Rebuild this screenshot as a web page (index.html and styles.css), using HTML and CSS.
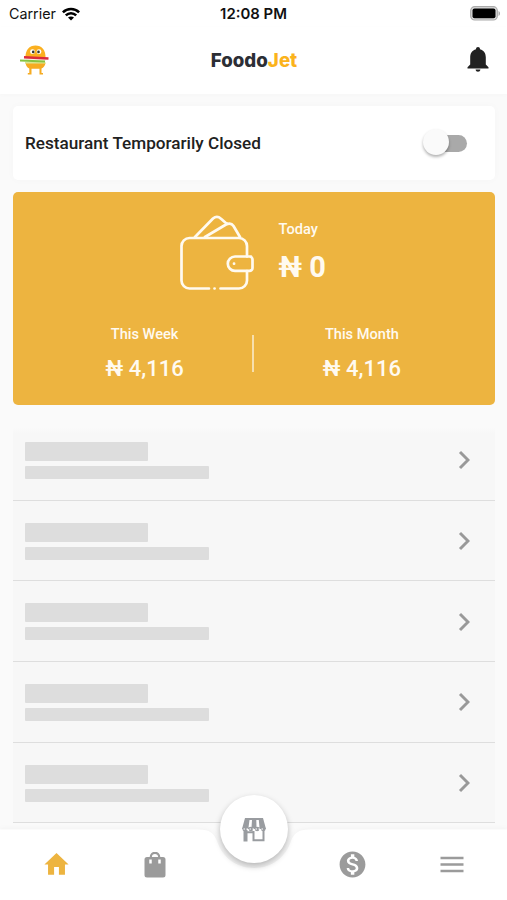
FILE: index.html
```html
<!DOCTYPE html>
<html lang="en">
<head>
<meta charset="utf-8">
<title>FoodoJet</title>
<link rel="stylesheet" href="styles.css">
</head>
<body>
<div class="app">
  <div class="status">
    <div class="carrier">Carrier
      <svg width="18" height="14" viewBox="0 0 18 14" fill="none" stroke="#000" stroke-width="2.5"><path d="M.9 5.3C5.3.8 12.7.8 17.1 5.3M3.8 8.4c2.9-2.9 7.5-2.9 10.4 0"/><path d="M9 13.6 6 10.6c1.700-1.400 4.300-1.400 6 0z" fill="#000" stroke="none"/></svg>
    </div>
    <div class="clock">12:08 PM</div>
    <svg class="battery" width="31" height="15" viewBox="0 0 31 15"><rect x=".7" y=".7" width="26.600" height="13.300" rx="4" fill="#ddd" stroke="#aaa" stroke-width="1.200"/><rect x="2.500" y="2.500" width="23" height="9.700" rx="2" fill="#000"/><path d="M28.500 5v5c2-.8 2-4.200 0-5z" fill="#aaa"/></svg>
  </div>
  <header class="header">
    <svg class="mascot" width="30" height="30" viewBox="0 0 30 30"><path d="M5.500 13C5 5 9.500.5 15.500.5S26 5 25.500 13z" fill="#fbb01f"/><path d="M5.500 18h20c-.5 3-2 4.500-4 5.500V28h1.500v1.500h-3.500v-5.700h-8v5.700H7.800V28h1.500v-4.500c-2-1-3.300-2.500-3.800-5.500z" fill="#f6ab22"/><path d="M5.500 12.500h20V16h-20z" fill="#fcefe0"/><path d="M4 12.200 28.500 13.500" stroke="#dc2b3b" stroke-width="2.400"/><path d="M5 17.800h20.500" stroke="#dbe38a" stroke-width="1.500"/><path d="M0 15.500 25 16.500" stroke="#87c440" stroke-width="2"/><circle cx="12.500" cy="6.700" r="2.400" fill="#fff"/><circle cx="19" cy="6.700" r="2.400" fill="#fff"/><circle cx="13.200" cy="6.900" r="1.300" fill="#333"/><circle cx="18.500" cy="6.900" r="1.300" fill="#333"/></svg>
    <div class="brand">Foodo<span>Jet</span></div>
    <svg class="bell" width="22" height="26" viewBox="0 0 22 26" fill="#212121"><path d="M11 0c1.200 0 2 .9 2 2.200 4 1 5.800 4.300 5.800 8v7.300l2.700 2.700v1.300H.5v-1.300l2.700-2.700v-7.300c0-3.700 1.800-7 5.800-8C9 .9 9.800 0 11 0zM8.600 22.600h4.800c-.2 1.400-1.100 2.200-2.400 2.200s-2.200-.8-2.400-2.200z"/></svg>
  </header>
  <main class="main">
    <section class="closed"><span>Restaurant Temporarily Closed</span><div class="switch"><i></i></div></section>
    <section class="earnings">
      <div class="today">
        <svg class="wallet" width="76" height="76" viewBox="0 0 76 76" fill="none" stroke="#fffaf0" stroke-width="2.700" stroke-linecap="round" stroke-linejoin="round"><path d="M30 73.500H10.500a8 8 0 0 1-8-8V31a8 8 0 0 1 8-8H60a8 8 0 0 1 8 8v10.500M68 56v9.500a8 8 0 0 1-8 8H41.500M35.500 73.500h.1"/><path d="M72 41.500H56a7.200 7.200 0 0 0 0 14.400h14.500a3 3 0 0 0 3-3V44.500a3 3 0 0 0-3-3M55 48.700h.1"/><path d="M16 22 34 3.500q4-3.500 8 .2L48 9M26 22 47 9.500q5-2.500 7.500 1.500L61 22"/></svg>
        <div class="amount"><small>Today</small><strong>₦ 0</strong></div>
      </div>
      <div class="periods">
        <div class="period"><small>This Week</small><b>₦ 4,116</b></div>
        <div class="divider"></div>
        <div class="period"><small>This Month</small><b>₦ 4,116</b></div>
      </div>
    </section>
    <section class="list">
      <div class="row"><div><i class="bar title"></i><i class="bar line"></i></div><svg class="chev" viewBox="0 0 12 20"><path d="m2 2 8 8-8 8"/></svg></div>
      <div class="row"><div><i class="bar title"></i><i class="bar line"></i></div><svg class="chev" viewBox="0 0 12 20"><path d="m2 2 8 8-8 8"/></svg></div>
      <div class="row"><div><i class="bar title"></i><i class="bar line"></i></div><svg class="chev" viewBox="0 0 12 20"><path d="m2 2 8 8-8 8"/></svg></div>
      <div class="row"><div><i class="bar title"></i><i class="bar line"></i></div><svg class="chev" viewBox="0 0 12 20"><path d="m2 2 8 8-8 8"/></svg></div>
      <div class="row"><div><i class="bar title"></i><i class="bar line"></i></div><svg class="chev" viewBox="0 0 12 20"><path d="m2 2 8 8-8 8"/></svg></div>
    </section>
  </main>
  <nav class="nav">
    <svg class="navshape" viewBox="0 0 507 71"><path d="M0 .5H198C211 .5 214 5 217 12C222 28 236 39 254 39S286 28 291 12C294 5 297 .5 310 .5H507V71H0z" fill="#fff"/></svg>
    <div class="item"><svg width="29" height="31" viewBox="0 0 24 24" preserveAspectRatio="none" fill="#edb440"><path d="M10 20v-6h4v6h5v-8h3L12 3 2 12h3v8z"/></svg></div>
    <div class="item"><svg width="22" height="26" viewBox="0 0 22 26"><path d="M3 5h16a2.500 2.500 0 0 1 2.500 2.500V23a2.500 2.500 0 0 1-2.500 2.500H3A2.500 2.500 0 0 1 .5 23V7.500A2.500 2.500 0 0 1 3 5z" fill="#9b9b9b"/><path d="M6.800 6V5a4.200 4.200 0 0 1 8.400 0v1" fill="none" stroke="#9b9b9b" stroke-width="2.200"/><path d="M6.500 7.500v4M15.500 7.500v4" stroke="#fff" stroke-width="2.500"/></svg></div>
    <div class="item"></div>
    <div class="item"><svg width="31" height="31" viewBox="0 0 24 24" fill="#9b9b9b"><path d="M12 2C6.480 2 2 6.480 2 12s4.480 10 10 10 10-4.480 10-10S17.520 2 12 2zm1.410 16.090V20h-2.670v-1.930c-1.710-.36-3.160-1.460-3.270-3.400h1.960c.1 1.050.82 1.870 2.650 1.870 1.960 0 2.400-.98 2.400-1.590 0-.83-.44-1.610-2.670-2.140-2.480-.6-4.180-1.620-4.180-3.670 0-1.720 1.390-2.840 3.110-3.210V4h2.670v1.950c1.860.45 2.790 1.860 2.850 3.390H14.300c-.05-1.110-.64-1.870-2.220-1.870-1.500 0-2.400.68-2.400 1.640 0 .84.65 1.390 2.670 1.910s4.180 1.390 4.180 3.910c-.01 1.830-1.380 2.830-3.120 3.160z"/></svg></div>
    <div class="item"><svg width="24" height="17" viewBox="0 0 24 17"><path d="M.5 2h23M.5 8.500h23M.5 15h23" stroke="#9b9b9b" stroke-width="2.500"/></svg></div>
    <div class="fab"><svg width="26" height="25" viewBox="0 0 26 25" fill="none" stroke="#999ca0"><path d="M4 1h18l3 11H1z" fill="#999ca0" stroke="none"/><path d="M8.500 3H11l-.5 7.500h-3zM15.300 3h2.500l.7 7.500h-3z" fill="#fff" stroke="none"/><circle cx="3.700" cy="12" r="2.300" fill="#999ca0" stroke="none"/><circle cx="9.900" cy="12" r="2.300" fill="#999ca0" stroke="none"/><circle cx="16.100" cy="12" r="2.300" fill="#999ca0" stroke="none"/><circle cx="22.300" cy="12" r="2.300" fill="#999ca0" stroke="none"/><path d="M2.500 12h21" stroke="#fff" stroke-width="1" stroke-dasharray="1.500 1.500"/><path d="M2.500 13h4v11.500h-4z" fill="#999ca0" stroke="none"/><path d="M6 15.200h6.500M12.500 14v9.300H22.500V14" stroke-width="2"/></svg></div>
  </nav>
</div>
</body>
</html>
```
FILE: styles.css
```css
* { box-sizing: border-box; }
body { margin: 0; font-family: Roboto, "Liberation Sans", sans-serif; background: #fafafa; }
svg { display: block; flex: none; }
.app { width: 507px; height: 900px; display: flex; flex-direction: column; overflow: hidden; }
.status { height: 27px; background: #fff; display: grid; grid-template-columns: 1fr auto 1fr; align-items: center; padding: 0 6px 0 9px; font-family: Inter, sans-serif; font-size: 14.300px; color: #111; }
.carrier { display: flex; align-items: center; gap: 6px; }
.clock { font-weight: 600; font-size: 14.900px; margin-right: 3px; }
.battery { justify-self: end; }
.header { height: 67px; background: #fff; display: grid; grid-template-columns: 1fr auto 1fr; align-items: center; padding: 0 18px 2px 20px; box-shadow: 0 1px 5px rgba(0,0,0,.02); }
.brand { font-family: Inter, sans-serif; font-weight: 800; font-size: 18.700px; color: #2c2e35; margin: 2px 1px 0 0; }
.brand span { color: #fbb31c; }
.bell { justify-self: end; }
.main { padding: 12px 12.500px 0 13px; height: 736px; }
.closed { height: 74px; background: #fff; border-radius: 5px; box-shadow: 0 0 8px rgba(0,0,0,.025); display: flex; align-items: center; justify-content: space-between; padding: 0 28px 0 12px; font-size: 17.150px; font-weight: 500; color: #212121; }
.switch { width: 43px; height: 17px; border-radius: 9px; background: linear-gradient(to right, transparent 8px, #a9a9a9 8px); display: flex; align-items: center; }
.switch i { width: 26px; height: 26px; border-radius: 50%; background: #fafafa; box-shadow: 0 2px 3px rgba(0,0,0,.3); flex: none; margin: -2px 0 0 -1px; }
.earnings { margin-top: 12px; height: 213px; background: #edb440; border-radius: 5px; color: #fffaf0; padding-top: 23px; }
.today { display: flex; padding-left: 166px; gap: 23.500px; height: 76px; }
.amount { display: flex; flex-direction: column; padding-top: 4px; }
small { font-size: 14.600px; font-weight: 500; line-height: 20px; }
.amount strong { font-size: 29px; line-height: 34px; margin-top: 11px; font-weight: 700; }
.periods { display: flex; margin-top: 33px; }
.period { flex: 1; display: flex; flex-direction: column; align-items: center; padding-left: 24px; }
.period:last-child { padding: 0 25px 0 0; }
.period b { font-size: 22px; font-weight: 500; line-height: 28px; margin-top: 11px; }
.divider { width: 2px; height: 37px; background: #f7dfad; margin-top: 11px; }
.list { margin-top: 15px; background: linear-gradient(#fafafa 8px, #f7f7f7 14px); }
.row { height: 80.700px; border-bottom: 1.500px solid #dedede; display: flex; justify-content: space-between; align-items: center; padding: 1px 25px 0 12px; }
.bar { display: block; background: #ddd; border-radius: 1px; }
.title { width: 123px; height: 19px; }
.line { width: 184px; height: 13px; margin-top: 5px; }
.chev { width: 12px; height: 20px; fill: none; stroke: #999; stroke-width: 3; }
.nav { height: 71px; flex: none; position: relative; display: flex; padding: 0 6px 0 7px; margin-top: -1px; }
.navshape { position: absolute; left: 0; top: 0; width: 507px; height: 71px; filter: drop-shadow(0 -1px 2px rgba(0,0,0,.03)); }
.item { flex: 1; position: relative; display: flex; align-items: center; justify-content: center; }
.fab { position: absolute; left: 220px; top: -34px; width: 68px; height: 68px; border-radius: 50%; background: #fff; display: flex; align-items: center; justify-content: center; box-shadow: 0 3px 6px rgba(0,0,0,.28); }
```
